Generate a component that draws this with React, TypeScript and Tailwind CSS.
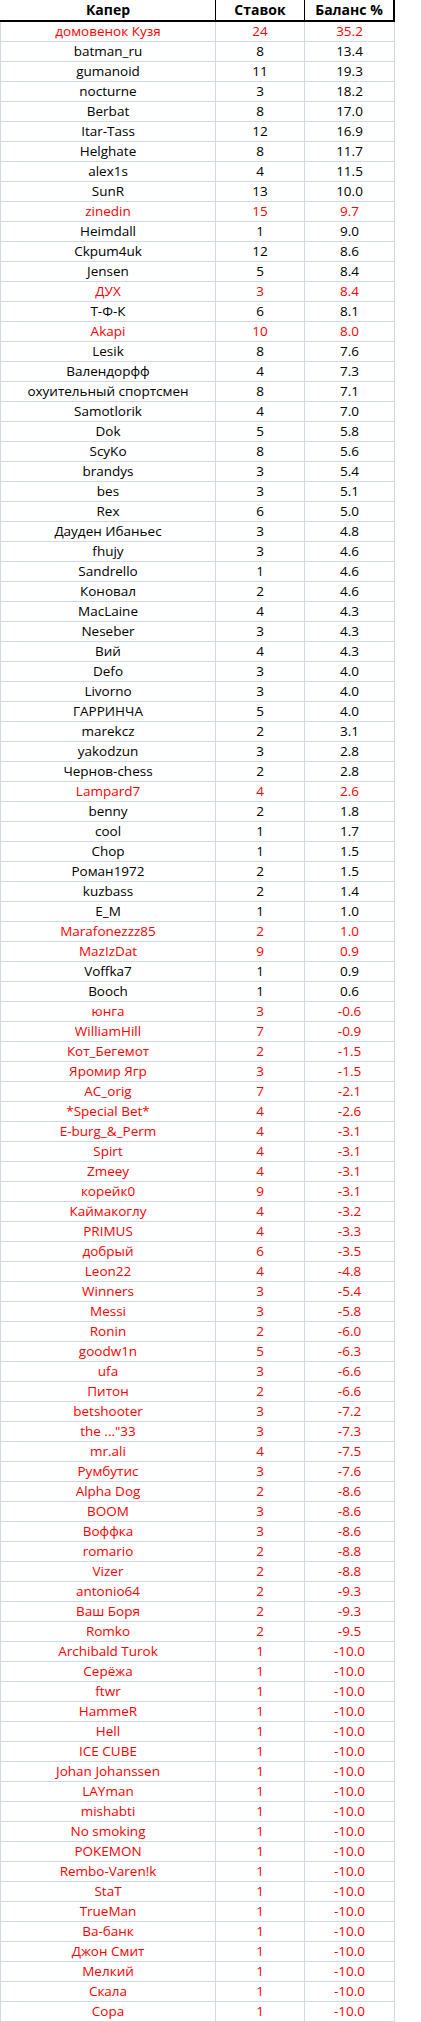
const rows: [string, number, string, boolean?][] = [
  ["домовенок Кузя", 24, "35.2", true],
  ["batman_ru", 8, "13.4"],
  ["gumanoid", 11, "19.3"],
  ["nocturne", 3, "18.2"],
  ["Berbat", 8, "17.0"],
  ["Itar-Tass", 12, "16.9"],
  ["Helghate", 8, "11.7"],
  ["alex1s", 4, "11.5"],
  ["SunR", 13, "10.0"],
  ["zinedin", 15, "9.7", true],
  ["Heimdall", 1, "9.0"],
  ["Ckpum4uk", 12, "8.6"],
  ["Jensen", 5, "8.4"],
  ["ДУХ", 3, "8.4", true],
  ["Т-Ф-К", 6, "8.1"],
  ["Akapi", 10, "8.0", true],
  ["Lesik", 8, "7.6"],
  ["Валендорфф", 4, "7.3"],
  ["охуительный спортсмен", 8, "7.1"],
  ["Samotlorik", 4, "7.0"],
  ["Dok", 5, "5.8"],
  ["ScyKo", 8, "5.6"],
  ["brandys", 3, "5.4"],
  ["bes", 3, "5.1"],
  ["Rex", 6, "5.0"],
  ["Дауден Ибаньес", 3, "4.8"],
  ["fhujy", 3, "4.6"],
  ["Sandrello", 1, "4.6"],
  ["Коновал", 2, "4.6"],
  ["MacLaine", 4, "4.3"],
  ["Neseber", 3, "4.3"],
  ["Вий", 4, "4.3"],
  ["Defo", 3, "4.0"],
  ["Livorno", 3, "4.0"],
  ["ГАРРИНЧА", 5, "4.0"],
  ["marekcz", 2, "3.1"],
  ["yakodzun", 3, "2.8"],
  ["Чернов-chess", 2, "2.8"],
  ["Lampard7", 4, "2.6", true],
  ["benny", 2, "1.8"],
  ["cool", 1, "1.7"],
  ["Chop", 1, "1.5"],
  ["Роман1972", 2, "1.5"],
  ["kuzbass", 2, "1.4"],
  ["E_M", 1, "1.0"],
  ["Marafonezzz85", 2, "1.0", true],
  ["MazIzDat", 9, "0.9", true],
  ["Voffka7", 1, "0.9"],
  ["Booch", 1, "0.6"],
  ["юнга", 3, "-0.6", true],
  ["WilliamHill", 7, "-0.9", true],
  ["Кот_Бегемот", 2, "-1.5", true],
  ["Яромир Ягр", 3, "-1.5", true],
  ["AC_orig", 7, "-2.1", true],
  ["*Special Bet*", 4, "-2.6", true],
  ["E-burg_&_Perm", 4, "-3.1", true],
  ["Spirt", 4, "-3.1", true],
  ["Zmeey", 4, "-3.1", true],
  ["корейк0", 9, "-3.1", true],
  ["Каймакоглу", 4, "-3.2", true],
  ["PRIMUS", 4, "-3.3", true],
  ["добрый", 6, "-3.5", true],
  ["Leon22", 4, "-4.8", true],
  ["Winners", 3, "-5.4", true],
  ["Messi", 3, "-5.8", true],
  ["Ronin", 2, "-6.0", true],
  ["goodw1n", 5, "-6.3", true],
  ["ufa", 3, "-6.6", true],
  ["Питон", 2, "-6.6", true],
  ["betshooter", 3, "-7.2", true],
  ['the ..."33', 3, "-7.3", true],
  ["mr.ali", 4, "-7.5", true],
  ["Румбутис", 3, "-7.6", true],
  ["Alpha Dog", 2, "-8.6", true],
  ["BOOM", 3, "-8.6", true],
  ["Воффка", 3, "-8.6", true],
  ["romario", 2, "-8.8", true],
  ["Vizer", 2, "-8.8", true],
  ["antonio64", 2, "-9.3", true],
  ["Ваш Боря", 2, "-9.3", true],
  ["Romko", 2, "-9.5", true],
  ["Archibald Turok", 1, "-10.0", true],
  ["Серёжа", 1, "-10.0", true],
  ["ftwr", 1, "-10.0", true],
  ["HammeR", 1, "-10.0", true],
  ["Hell", 1, "-10.0", true],
  ["ICE CUBE", 1, "-10.0", true],
  ["Johan Johanssen", 1, "-10.0", true],
  ["LAYman", 1, "-10.0", true],
  ["mishabti", 1, "-10.0", true],
  ["No smoking", 1, "-10.0", true],
  ["POKEMON", 1, "-10.0", true],
  ["Rembo-Varen!k", 1, "-10.0", true],
  ["StaT", 1, "-10.0", true],
  ["TrueMan", 1, "-10.0", true],
  ["Ва-банк", 1, "-10.0", true],
  ["Джон Смит", 1, "-10.0", true],
  ["Мелкий", 1, "-10.0", true],
  ["Скала", 1, "-10.0", true],
  ["Сора", 1, "-10.0", true],
];

export default function App() {
  return (
    <div className="min-h-screen bg-white font-['Open_Sans',_sans-serif] text-[13.5px] text-black">
      <div className="w-[395px]">
        {/* header */}
        <div className="grid h-[22px] grid-cols-[216px_89px_90px] border-b-2 border-black text-[14px] font-bold leading-[20px]">
          <div className="border-r border-black pl-px text-center">Капер</div>
          <div className="border-r border-black text-center">Ставок</div>
          <div className="border-r-2 border-black text-center">Баланс %</div>
        </div>

        {rows.map(([name, bets, balance, red]) => (
          <div
            key={name}
            className={`grid h-[20px] grid-cols-[216px_89px_90px] border-b border-[#d0d7e5] leading-[19px] ${
              red ? "text-[#ff0000]" : "text-black"
            }`}
          >
            <div className="border-x border-[#d0d7e5] text-center whitespace-nowrap">{name}</div>
            <div className="border-r border-[#d0d7e5] text-center">{bets}</div>
            <div className="border-r border-[#d0d7e5] text-center">{balance}</div>
          </div>
        ))}
      </div>
    </div>
  );
}
